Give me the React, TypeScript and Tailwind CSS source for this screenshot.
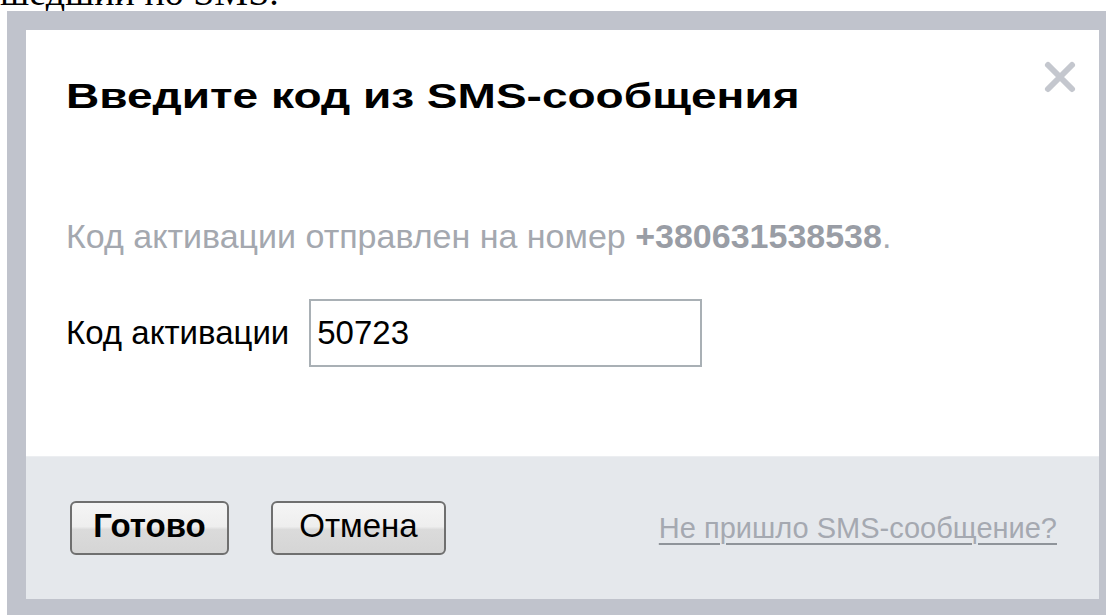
import React, { useState } from 'react';

const sans = { fontFamily: '"Liberation Sans", Arial, sans-serif' };

const btn =
  'h-[54px] rounded-[6px] border-2 border-[#6f6f6f] bg-[linear-gradient(#f5f5f5_0%,#eeeeee_47%,#dbdbdb_53%,#d5d5d5_100%)] pb-[4px] text-[33px] leading-[36px] text-black';

const CloseIcon: React.FC = () => (
  <svg width="34" height="34" viewBox="0 0 34 34" className="block">
    <path d="M5 5 L29 29 M29 5 L5 29" stroke="#c4c7ce" strokeWidth="6" strokeLinecap="round" />
  </svg>
);

const SmsCodeDialog: React.FC = () => {
  const [code, setCode] = useState('50723');

  return (
    <div className="ml-[7px] w-[1111px] border-[19px] border-[#c0c3cc] bg-white" style={sans}>
      <div className="h-[426px] pl-[40px] pr-[22px]">
        <div className="flex items-start justify-between pt-[30px]">
          <h1 className="mt-[16px] text-[35px] font-bold leading-[40px] text-black">
            <span className="inline-block origin-left scale-x-[1.315] whitespace-nowrap">Введите код из SMS-сообщения</span>
          </h1>
          <button className="cursor-pointer" aria-label="Закрыть">
            <CloseIcon />
          </button>
        </div>

        <p className="mt-[102px] text-[34px] leading-[36px] text-[#a4a8af]">
          Код активации отправлен на номер <b className="font-bold text-[#999da5]">+380631538538</b>.
        </p>

        <div className="mt-[45px] flex items-center gap-[20px]">
          <label htmlFor="sms-code" className="text-[33px] leading-[36px] text-black">Код активации</label>
          <input
            id="sms-code"
            value={code}
            onChange={(e) => setCode(e.target.value)}
            className="h-[68px] w-[393px] border-2 border-[#a9b0b5] px-[6px] text-[33px] text-black outline-none"
          />
        </div>
      </div>

      <div className="flex h-[143px] items-center border-t border-[#eceef1] bg-[#e5e8ec] pl-[44px] pr-[42px]">
        <button className={`${btn} w-[159px] font-bold`}>Готово</button>
        <button className={`${btn} ml-[42px] w-[175px]`}>Отмена</button>
        <a
          href="#"
          className="ml-auto text-[29px] leading-[32px] text-[#a5a9b1] underline decoration-[#8f949a] decoration-2 underline-offset-[5px]"
        >
          Не пришло SMS-сообщение?
        </a>
      </div>
    </div>
  );
};

export default function App() {
  return (
    <div className="h-[615px] w-[1106px] overflow-hidden bg-white">
      <div className="h-[11px] overflow-hidden">
        <p
          className="-mt-[28px] whitespace-nowrap text-[38px] leading-[40px] text-black"
          style={{ fontFamily: '"Liberation Serif", "Times New Roman", serif' }}
        >
          шедший по SMS.
        </p>
      </div>
      <SmsCodeDialog />
    </div>
  );
}
